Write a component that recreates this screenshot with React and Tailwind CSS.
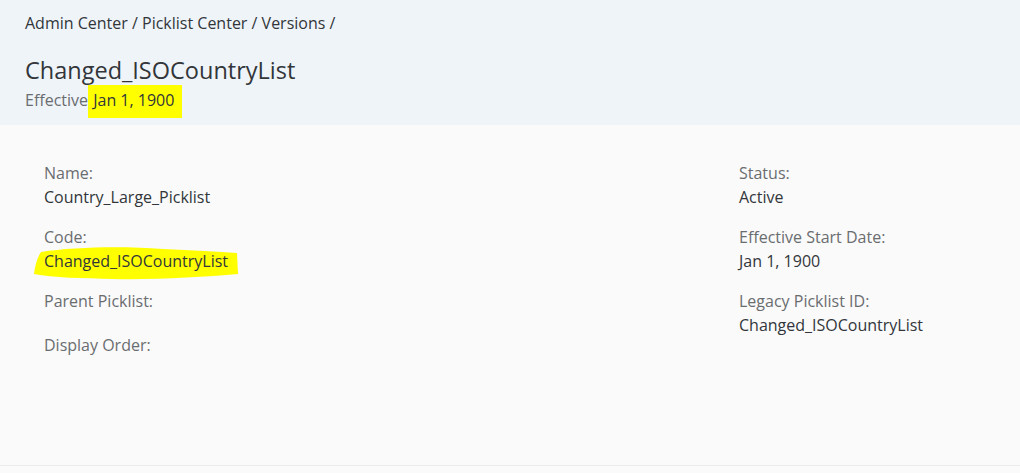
import React from "react";

const font = { fontFamily: '"Open Sans", "Noto Sans", Arial, sans-serif' };

const Field = ({ label, value, marked }) => (
  <div className="h-16">
    <div className="text-[16px] leading-6 text-[#6a6d70]">{label}</div>
    {value && (
      <div className="relative text-[16px] leading-6 text-[#32363a]">
        {marked && (
          <svg
            className="absolute left-[-11px] top-[-5px]"
            width="206"
            height="38"
            viewBox="0 0 206 38"
          >
            <path
              d="M8 8 C 40 3, 90 2, 130 5 C 160 6, 185 8, 204 9 L 205 30 C 170 33, 120 36, 80 35 C 50 34, 20 34, 1 30 C 2 22, 4 14, 8 8 Z"
              fill="#ffff00"
            />
          </svg>
        )}
        <span className="relative">{value}</span>
      </div>
    )}
  </div>
);

export default function App() {
  return (
    <div className="w-[1020px] h-[473px] bg-[#fafafa] flex flex-col" style={font}>
      <div className="h-[125px] bg-[#eff4f9] px-[25px] pt-[11px]">
        <div className="text-[16px] leading-6 text-[#32363a]">
          Admin Center / Picklist Center / Versions /
        </div>
        <div className="mt-[19px] text-[23.5px] leading-8 text-[#32363a]">
          Changed_ISOCountryList
        </div>
        <div className="mt-[2px] text-[16px] leading-6 text-[#6a6d70]">
          Effective{" "}
          <span className="inline-block bg-[#ffff00] text-[#32363a] pl-[5px] pr-[8px] ml-[-4px] pt-[3px] pb-[6px] -my-1">
            Jan 1, 1900
          </span>
        </div>
      </div>
      <div className="flex-1 flex pt-[36px]">
        <div className="w-[739px] pl-[44px]">
          <Field label="Name:" value="Country_Large_Picklist" />
          <Field label="Code:" value="Changed_ISOCountryList" marked />
          <div className="h-11 text-[16px] leading-6 text-[#6a6d70]">Parent Picklist:</div>
          <div className="text-[16px] leading-6 text-[#6a6d70]">Display Order:</div>
        </div>
        <div className="flex-1">
          <Field label="Status:" value="Active" />
          <Field label="Effective Start Date:" value="Jan 1, 1900" />
          <Field label="Legacy Picklist ID:" value="Changed_ISOCountryList" />
        </div>
      </div>
      <div className="h-[8px] border-t border-[#ececec]" />
    </div>
  );
}
